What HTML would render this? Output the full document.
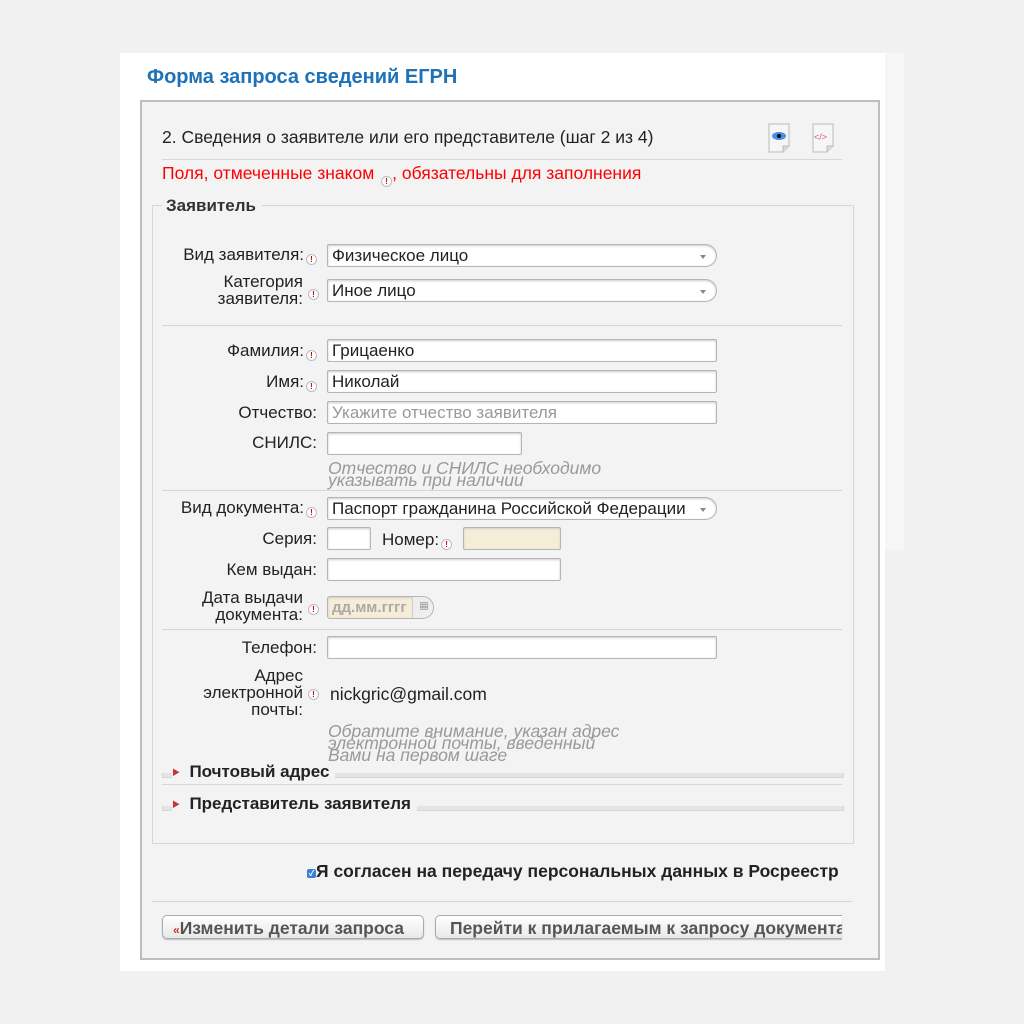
<!DOCTYPE html>
<html><head><meta charset="utf-8"><style>
body{margin:0;width:1024px;height:1024px;background:#f1f1f1;font-family:"Liberation Sans","Noto Sans CJK SC",sans-serif;position:relative;overflow:hidden;color:#222}
.a{position:absolute}
.card{left:120px;top:53px;width:765px;height:918px;background:#fff}
.strip{left:885px;top:53px;width:19px;height:497px;background:#f6f6f6}
.box{left:140px;top:100px;width:736px;height:856px;background:#f3f3f3;border:2px solid #bdbdbd}
.lbl{font-size:17px;text-align:right;width:174px;line-height:17px;white-space:nowrap}
.ml{font-size:17px;text-align:right;width:160px;left:143px;line-height:17px;white-space:nowrap}
.req{display:inline-block;width:9px;height:9px;border:1px solid #bbb;border-radius:50%;background:#fff;color:#d00;font-size:8px;line-height:9px;text-align:center;font-weight:bold;vertical-align:-2px;margin-left:2px}
.ra{position:absolute;left:306px}
.in{background:#fff;border:1px solid #b5b5b5;box-shadow:inset 0 1px 2px #ccc;border-radius:2px;height:23px;font-size:17px;line-height:22px;padding-left:4px;box-sizing:border-box;white-space:nowrap}
.sel{border-radius:2px 12px 12px 2px}
.sel:after{content:"";position:absolute;right:10px;top:10px;border:3px solid transparent;border-top:4px solid #888}
.sep{height:1px;background:#d6d6d6}
.hint{font-style:italic;color:#999;font-size:17.5px;line-height:12px;white-space:nowrap}
.btn{background:linear-gradient(#fff,#e8e8e8);border:1px solid #aaa;border-radius:5px;height:24px;font-size:17.5px;font-weight:bold;color:#555;line-height:24px;box-shadow:0 1px 1px #bbb;white-space:nowrap;overflow:hidden;box-sizing:border-box}
</style></head><body>
<div class="a card"></div><div class="a strip"></div>
<div class="a" style="left:147px;top:66px;font-size:20px;font-weight:bold;color:#1d72b8">Форма запроса сведений ЕГРН</div>
<div class="a box"></div>
<div class="a" style="left:162px;top:127px;font-size:17.5px;white-space:nowrap">2. Сведения о заявителе или его представителе (шаг 2 из 4)</div>
<svg class="a" style="left:767px;top:122px" width="26" height="32"><path d="M2 2h20v22l-6 6H2z" fill="#f6f6f6" stroke="#bbb"/><path d="M16 30v-6h6" fill="#ddd" stroke="#bbb"/><ellipse cx="12" cy="14" rx="7" ry="4" fill="#4a90e2"/><circle cx="12" cy="14" r="2" fill="#000"/></svg>
<svg class="a" style="left:811px;top:122px" width="26" height="32"><path d="M2 2h20v22l-6 6H2z" fill="#f6f6f6" stroke="#bbb"/><path d="M16 30v-6h6" fill="#ddd" stroke="#bbb"/><text x="3" y="18" font-size="9" fill="#e0507a" font-family="Liberation Sans">&lt;/&gt;</text></svg>
<div class="a sep" style="left:162px;top:159px;width:680px"></div>
<div class="a" style="left:162px;top:163px;font-size:17.5px;color:#f00;white-space:nowrap">Поля, отмеченные знаком <span class="req" style="vertical-align:-5px">!</span>, обязательны для заполнения</div>
<div class="a" style="left:152px;top:205px;width:700px;height:638px;border:1px solid #d6d6d6;border-top:none"></div>
<div class="a sep" style="left:152px;top:205px;width:10px"></div>
<div class="a sep" style="left:262px;top:205px;width:590px"></div>
<div class="a" style="left:166px;top:196px;font-size:17px;font-weight:bold;color:#333">Заявитель</div>

<div class="a lbl" style="left:143px;top:246px">Вид заявителя:<span class="req">!</span></div>
<div class="a in sel" style="left:327px;top:244px;width:390px">Физическое лицо</div>
<div class="a ml" style="top:273px">Категория<br>заявителя:</div><span class="req a ra" style="top:289px">!</span>
<div class="a in sel" style="left:327px;top:279px;width:390px">Иное лицо</div>
<div class="a sep" style="left:162px;top:325px;width:680px"></div>

<div class="a lbl" style="left:143px;top:342px">Фамилия:<span class="req">!</span></div>
<div class="a in" style="left:327px;top:339px;width:390px">Грицаенко</div>
<div class="a lbl" style="left:143px;top:373px">Имя:<span class="req">!</span></div>
<div class="a in" style="left:327px;top:370px;width:390px">Николай</div>
<div class="a lbl" style="left:143px;top:404px">Отчество:</div>
<div class="a in" style="left:327px;top:401px;width:390px;color:#999">Укажите отчество заявителя</div>
<div class="a lbl" style="left:143px;top:434px">СНИЛС:</div>
<div class="a in" style="left:327px;top:432px;width:195px"></div>
<div class="a hint" style="left:328px;top:462px">Отчество и СНИЛС необходимо<br>указывать при наличии</div>
<div class="a sep" style="left:162px;top:490px;width:680px"></div>

<div class="a lbl" style="left:143px;top:499px">Вид документа:<span class="req">!</span></div>
<div class="a in sel" style="left:327px;top:497px;width:390px;overflow:hidden;padding-right:20px">Паспорт гражданина Российской Федерации</div>
<div class="a lbl" style="left:143px;top:530px">Серия:</div>
<div class="a in" style="left:327px;top:527px;width:44px"></div>
<div class="a" style="left:382px;top:530px;font-size:17px">Номер:<span class="req">!</span></div>
<div class="a in" style="left:463px;top:527px;width:98px;background:#f5edd6"></div>
<div class="a lbl" style="left:143px;top:561px">Кем выдан:</div>
<div class="a in" style="left:327px;top:558px;width:234px"></div>
<div class="a ml" style="top:589px">Дата выдачи<br>документа:</div><span class="req a ra" style="top:604px">!</span>
<div class="a in" style="left:327px;top:596px;width:107px;background:#f5edd6;color:#aaa;font-size:15px;font-weight:bold;border-radius:3px 12px 12px 3px;overflow:hidden">дд.мм.гггг<span style="position:absolute;left:84px;top:0;width:22px;height:21px;background:#eee;border-left:1px solid #ccc;border-radius:0 10px 10px 0;color:#888;font-size:10px;text-align:center">▦</span></div>
<div class="a sep" style="left:162px;top:629px;width:680px"></div>

<div class="a lbl" style="left:143px;top:639px">Телефон:</div>
<div class="a in" style="left:327px;top:636px;width:390px"></div>
<div class="a ml" style="top:667px">Адрес<br>электронной<br>почты:</div><span class="req a ra" style="top:689px">!</span>
<div class="a" style="left:330px;top:684px;font-size:17.5px">nickgric@gmail.com</div>
<div class="a hint" style="left:328px;top:725px">Обратите внимание, указан адрес<br>электронной почты, введенный<br>Вами на первом шаге</div>

<div class="a sep" style="left:162px;top:773px;width:680px;height:4px;background:#e4e4e4;border:1px solid #d6d6d6;border-top:none"></div>
<div class="a" style="left:172px;top:762px;font-size:17px;font-weight:bold;background:#f3f3f3;padding-right:6px"><span style="color:#c33;font-size:8px;vertical-align:2px">▶</span>&nbsp; Почтовый адрес</div>
<div class="a sep" style="left:162px;top:784px;width:680px"></div>
<div class="a sep" style="left:162px;top:806px;width:680px;height:4px;background:#e4e4e4;border:1px solid #d6d6d6;border-top:none"></div>
<div class="a" style="left:172px;top:794px;font-size:17px;font-weight:bold;background:#f3f3f3;padding-right:6px"><span style="color:#c33;font-size:8px;vertical-align:2px">▶</span>&nbsp; Представитель заявителя</div>

<div class="a" style="left:307px;top:861px;font-size:17.5px;font-weight:bold;white-space:nowrap"><span style="display:inline-block;width:9px;height:9px;background:#3b7fd6;border-radius:2px;vertical-align:1px;color:#fff;font-size:8px;line-height:9px;text-align:center">✓</span>Я согласен на передачу персональных данных в Росреестр</div>
<div class="a sep" style="left:152px;top:901px;width:700px"></div>
<div class="a btn" style="left:162px;top:915px;width:262px;padding-left:10px"><span style="color:#c33;font-size:12px">«</span>Изменить детали запроса</div>
<div class="a btn" style="left:435px;top:915px;width:407px;padding-left:14px;border-right:none;border-radius:5px 0 0 5px">Перейти к прилагаемым к запросу документам</div>
</body></html>
